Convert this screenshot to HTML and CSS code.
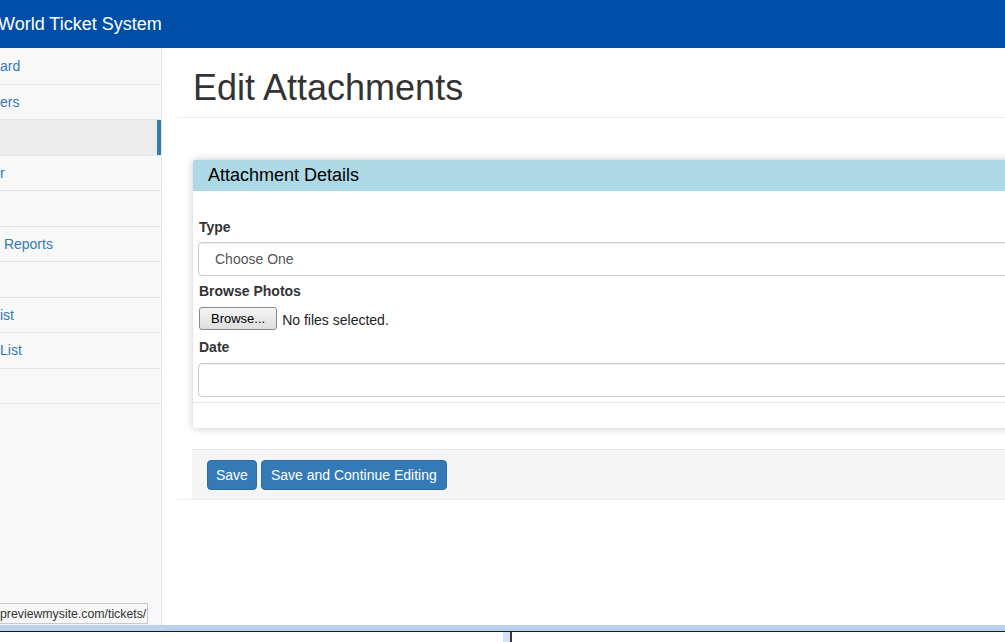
FILE: index.html
```html
<!DOCTYPE html>
<html>
<head>
<meta charset="utf-8">
<title>Edit Attachments</title>
<link rel="stylesheet" href="styles.css">
</head>
<body>
<nav class="navbar"><span class="brand">World Ticket System</span></nav>
<div class="layout">
  <aside class="sidebar">
    <ul class="side-nav">
      <li><a href="#">ard</a></li>
      <li><a href="#">ers</a></li>
      <li class="active"><a href="#"></a></li>
      <li><a href="#">r</a></li>
      <li><a href="#"></a></li>
      <li><a href="#">&nbsp;Reports</a></li>
      <li><a href="#"></a></li>
      <li><a href="#">ist</a></li>
      <li><a href="#">List</a></li>
      <li><a href="#"></a></li>
    </ul>
  </aside>
  <main class="main">
    <div class="page-header"><h1>Edit Attachments</h1></div>
    <div class="panel">
      <div class="panel-heading">Attachment Details</div>
      <div class="panel-body">
        <label class="form-label">Type</label>
        <div class="form-control select">Choose One</div>
        <label class="form-label">Browse Photos</label>
        <div class="file-row"><span class="browse-btn">Browse...</span><span class="file-status">No files selected.</span></div>
        <label class="form-label date-label">Date</label>
        <div class="form-control"></div>
      </div>
      <div class="panel-footer"></div>
    </div>
    <div class="actions-wrap">
      <div class="form-actions">
        <button class="btn">Save</button>
        <button class="btn btn-wide">Save and Continue Editing</button>
      </div>
    </div>
  </main>
</div>
<div class="status-tip"><span>previewmysite.com/tickets/</span></div>
<div class="taskbar"><span class="tb-block"></span></div>
</body>
</html>
```
FILE: styles.css
```css
html, body {
  margin: 0;
  padding: 0;
}
body {
  width: 1005px;
  height: 642px;
  overflow: hidden;
  position: relative;
  font-family: "Liberation Sans", Arial, sans-serif;
  font-size: 14px;
  color: #333;
  background: #fff;
}
.navbar {
  height: 48px;
  background: #014ea8;
  display: flex;
  align-items: center;
}
.brand {
  color: #fff;
  font-size: 18px;
  line-height: 46px;
  margin-left: -2px;
  white-space: nowrap;
}
.layout {
  display: flex;
  height: 594px;
}
.sidebar {
  width: 161px;
  flex: none;
  background: #f8f8f8;
  border-right: 1px solid #e7e7e7;
}
.side-nav {
  list-style: none;
  margin: 0;
  padding: 1px 0 0;
}
.side-nav li {
  height: 35.5px;
  box-sizing: border-box;
  border-bottom: 1px solid #e7e7e7;
  display: flex;
  align-items: center;
  position: relative;
}
.side-nav a {
  color: #337ab7;
  text-decoration: none;
  font-size: 14px;
  white-space: nowrap;
}
.side-nav li.active {
  background: #ececec;
}
.side-nav li.active::after {
  content: "";
  position: absolute;
  right: 0;
  top: 0;
  bottom: 0;
  width: 4px;
  background: #337ab7;
}
.main {
  flex: 1;
  min-width: 0;
  padding-left: 15px;
}
.page-header {
  margin-top: 20px;
  padding: 0 0 9px 16px;
  border-bottom: 1px solid #eee;
}
.page-header h1 {
  margin: 0;
  font-size: 36px;
  line-height: 40px;
  font-weight: normal;
  color: #333;
  white-space: nowrap;
}
.panel {
  margin: 42px 0 0 16px;
  width: 950px;
  background: #fff;
  border-radius: 4px;
  box-shadow: 0 0 10px rgba(0, 0, 0, 0.22);
}
.panel-heading {
  height: 31px;
  line-height: 31px;
  background: #add8e6;
  padding-left: 15px;
  font-size: 18px;
  color: #000;
  border-radius: 2px 2px 0 0;
}
.panel-body {
  padding: 26px 0 0 5px;
}
.form-label {
  display: block;
  font-weight: bold;
  line-height: 20px;
  margin: 0 0 5px 1px;
  color: #333;
}
.date-label {
  line-height: 18px;
  margin-bottom: 7px;
}
.form-control {
  height: 34px;
  box-sizing: border-box;
  border: 1px solid #ccc;
  border-radius: 4px;
  box-shadow: inset 0 1px 1px rgba(0, 0, 0, 0.075);
  margin-bottom: 5px;
}
.select {
  display: flex;
  align-items: center;
  padding-left: 16px;
  color: #555;
}
.file-row {
  height: 25px;
  display: flex;
  align-items: center;
  margin-left: 1px;
  margin-bottom: 7px;
}
.browse-btn {
  height: 23px;
  box-sizing: border-box;
  padding: 0 11px;
  display: flex;
  align-items: center;
  font-size: 13px;
  color: #000;
  border: 1px solid #8a8a8a;
  border-radius: 3px;
  background: linear-gradient(#f4f4f4, #dedede);
}
.file-status {
  margin-left: 5px;
  padding-top: 2px;
  color: #222;
}
.panel-footer {
  height: 26px;
  box-sizing: border-box;
  border-top: 1px solid #e5e5e5;
}
.actions-wrap {
  margin-top: 21px;
  border-bottom: 1px solid #eee;
}
.form-actions {
  margin-left: 15px;
  background: #f5f5f5;
  border-top: 1px solid #e5e5e5;
  padding: 10px 15px 9px;
  display: flex;
  gap: 4px;
}
.btn {
  height: 30px;
  padding: 0 8px;
  font-family: "Liberation Sans", Arial, sans-serif;
  font-size: 14px;
  color: #fff;
  background: #337ab7;
  border: 1px solid #2e6da4;
  border-radius: 4px;
  cursor: pointer;
}
.btn-wide {
  padding: 0 9px;
}
.status-tip {
  position: absolute;
  left: 0;
  top: 603px;
  width: 148px;
  height: 21px;
  box-sizing: border-box;
  background: #f7f7f7;
  border: 1px solid #c9c9c9;
  border-left: none;
  overflow: hidden;
  white-space: nowrap;
  font-size: 12.3px;
  line-height: 20px;
  color: #333;
}
.taskbar {
  position: absolute;
  left: 0;
  right: 0;
  top: 625px;
  height: 17px;
  box-sizing: border-box;
  background: #fff;
  border-top: 6px solid #b7d4ec;
}
.taskbar::before {
  content: "";
  position: absolute;
  left: 0;
  right: 0;
  top: 0;
  height: 1px;
  background: #1a1a1a;
}
.tb-block {
  position: absolute;
  left: 503px;
  top: 1px;
  width: 7px;
  height: 10px;
  background: #d4e3f3;
  border-right: 2px solid #3a3a3a;
}
```
